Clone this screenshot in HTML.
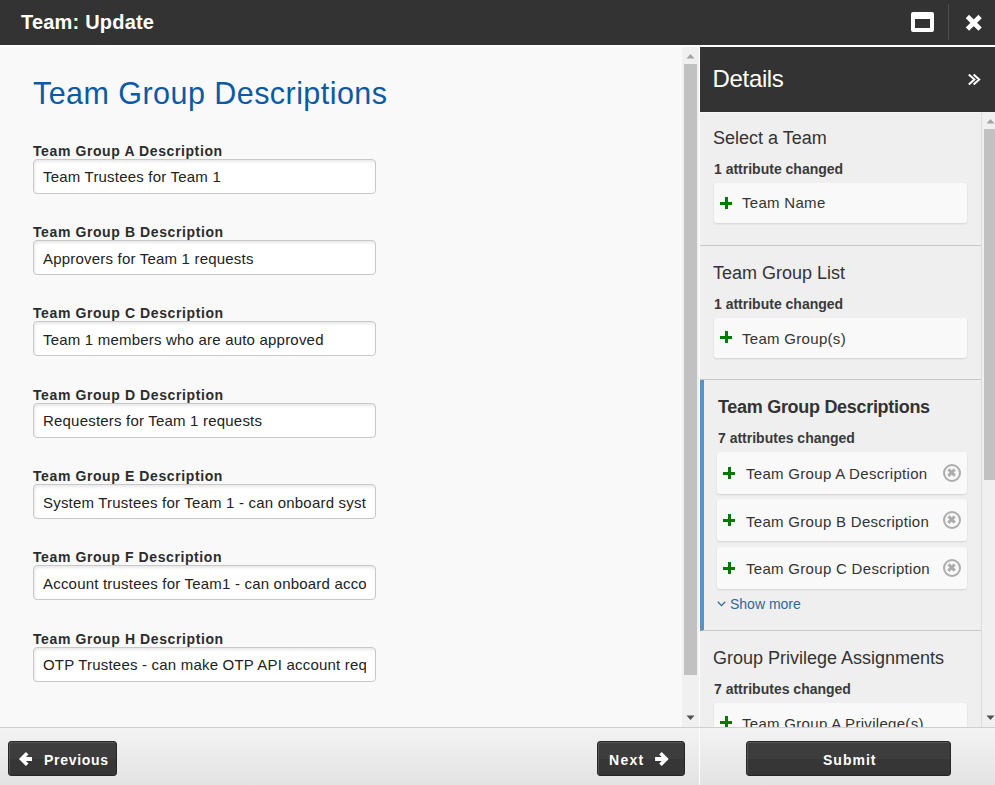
<!DOCTYPE html>
<html><head><meta charset="utf-8">
<style>
*{box-sizing:border-box;margin:0;padding:0}
html,body{width:995px;height:785px;overflow:hidden;background:#f9f9f9;font-family:"Liberation Sans",sans-serif;position:relative}
.a{position:absolute}
.t{position:absolute;white-space:nowrap;line-height:1}
#top{left:0;top:0;width:995px;height:45px;background:#333}
#title{left:21px;top:12px;font-size:20px;font-weight:bold;color:#fff;letter-spacing:0.2px}
#maxi{left:911px;top:12px;width:23px;height:20px;border:4px solid #fff;border-top-width:7px;border-radius:2px}
#vsep{left:948px;top:4px;width:1px;height:36px;background:#4d4d4d}
#strip{left:0;top:45px;width:995px;height:2px;background:#fff}
#left{left:0;top:47px;width:683px;height:680px;background:#f9f9f9}
h1{position:absolute;left:33px;top:78px;font-size:30.5px;font-weight:normal;color:#0a5aa5;letter-spacing:0.45px;line-height:1;white-space:nowrap}
.lbl{position:absolute;left:33px;font-size:14px;font-weight:bold;color:#2c2c2c;letter-spacing:0.6px;line-height:1;white-space:nowrap}
.inp{position:absolute;left:33px;width:343px;height:35px;background:#fff;border:1px solid #c8c8c8;border-radius:4px;box-shadow:inset 1px 2px 3px rgba(0,0,0,.09);overflow:hidden}
.inp span{position:absolute;left:9px;right:9px;overflow:hidden;height:20px;top:9px;font-size:15px;color:#222;letter-spacing:0.2px;line-height:1;white-space:nowrap}
.sb{background:#f0f0f0}
.thumb{background:#c1c1c1}
#footer{left:0;top:727px;width:995px;height:58px;border-top:1px solid #cfcfcf;background:linear-gradient(#f3f3f3,#e3e3e3)}
#fsep{left:699px;top:728px;width:1px;height:57px;background:#fff}
.btn{position:absolute;top:741px;height:35px;border:1px solid #262626;border-radius:3px;box-shadow:inset 1px 1px 0 rgba(255,255,255,.13);background:linear-gradient(#3d3d3d 0,#3d3d3d 50%,#363636 50%,#363636 100%);color:#fff;font-weight:bold;font-size:14px}
.btn .t{top:10px}
#details{left:700px;top:47px;width:295px;height:65px;background:#333}
#rbody{left:700px;top:112px;width:295px;height:615px;background:#efefef;overflow:hidden}
.sec{position:absolute;left:0;width:281px;border-bottom:1px solid #c8c8c8}
.sh{position:absolute;left:13px;font-size:18px;color:#333;line-height:1;white-space:nowrap}
.cnt{position:absolute;left:14px;font-size:14px;font-weight:bold;color:#3a3a3a;line-height:1;white-space:nowrap}
.card{position:absolute;left:14px;width:253px;height:41px;background:#f9f9f9;border-radius:3px;box-shadow:0 1px 2px rgba(0,0,0,.12)}
.card .ct{position:absolute;left:28px;top:13px;font-size:15px;color:#333;letter-spacing:0.3px;line-height:1;white-space:nowrap}
.plus{position:absolute;left:6px;top:14px;width:12px;height:12px}
.plus:before{content:"";position:absolute;left:4.5px;top:0;width:3px;height:12px;background:#007a00}
.plus:after{content:"";position:absolute;left:0;top:4.5px;width:12px;height:3px;background:#007a00}
.xc{position:absolute;left:226px;top:12px;width:18px;height:18px;border:2.3px solid #acacac;border-radius:50%}
.xc:before,.xc:after{content:"";position:absolute;left:2px;top:5.2px;width:9.4px;height:3.2px;background:#acacac;transform:rotate(45deg)}
.xc:after{transform:rotate(-45deg)}
</style></head><body>
<div id="top" class="a"></div>
<div id="title" class="t">Team: Update</div>
<div id="maxi" class="a"></div>
<div id="vsep" class="a"></div>
<svg class="a" style="left:965px;top:14px" width="18" height="18" viewBox="0 0 18 18"><path d="M2.4 2.5L15.1 15.2M15.1 2.5L2.4 15.2" stroke="#fff" stroke-width="4.7"/></svg>
<div id="strip" class="a"></div>
<div id="left" class="a"></div>
<h1>Team Group Descriptions</h1>

<div class="lbl" style="top:144px">Team Group A Description</div>
<div class="inp" style="top:159px"><span>Team Trustees for Team 1</span></div>
<div class="lbl" style="top:225px">Team Group B Description</div>
<div class="inp" style="top:240px"><span style="top:10px">Approvers for Team 1 requests</span></div>
<div class="lbl" style="top:306px">Team Group C Description</div>
<div class="inp" style="top:321px"><span style="top:10px">Team 1 members who are auto approved</span></div>
<div class="lbl" style="top:388px">Team Group D Description</div>
<div class="inp" style="top:403px"><span>Requesters for Team 1 requests</span></div>
<div class="lbl" style="top:469px">Team Group E Description</div>
<div class="inp" style="top:484px"><span style="top:10px">System Trustees for Team 1 - can onboard systems</span></div>
<div class="lbl" style="top:550px">Team Group F Description</div>
<div class="inp" style="top:565px"><span style="top:10px">Account trustees for Team1 - can onboard accounts</span></div>
<div class="lbl" style="top:632px">Team Group H Description</div>
<div class="inp" style="top:647px"><span>OTP Trustees - can make OTP API account requests</span></div>

<!-- left scrollbar -->
<div class="a sb" style="left:682px;top:47px;width:17px;height:680px"></div>
<div class="a thumb" style="left:684px;top:64px;width:13px;height:611px"></div>
<svg class="a" style="left:686px;top:53px" width="9" height="6"><path d="M0.5 5.5L4.5 1L8.5 5.5Z" fill="#a3a3a3"/></svg>
<svg class="a" style="left:686px;top:715px" width="9" height="6"><path d="M0.5 0.5L4.5 5L8.5 0.5Z" fill="#505050"/></svg>
<div class="a" style="left:699px;top:47px;width:1px;height:680px;background:#fff"></div>

<!-- right panel -->
<div id="details" class="a"></div>
<div class="t" style="left:712.6px;top:67px;font-size:24px;color:#fff;letter-spacing:-0.35px">Details</div>
<svg class="a" style="left:962px;top:66px" width="26" height="26" viewBox="0 0 26 26"><path d="M6.8 8.6L12.4 13.6L6.8 18.6M11.6 8.6L17.2 13.6L11.6 18.6" stroke="#fff" stroke-width="2" fill="none"/></svg>

<div id="rbody" class="a">
  <div class="a" style="left:0;top:0;width:295px;height:1px;background:#f6f6f6"></div>
  <div class="sec" style="top:0;height:134px">
    <div class="sh" style="top:17px">Select a Team</div>
    <div class="cnt" style="top:50px">1 attribute changed</div>
    <div class="card" style="top:71px;height:40px"><div class="plus" style="top:14px"></div><div class="ct" style="top:12px">Team Name</div></div>
  </div>
  <div class="sec" style="top:134px;height:134px">
    <div class="sh" style="top:18px">Team Group List</div>
    <div class="cnt" style="top:51px">1 attribute changed</div>
    <div class="card" style="top:72px;height:40px"><div class="plus" style="top:13px"></div><div class="ct" style="top:13px">Team Group(s)</div></div>
  </div>
  <div class="sec" style="top:268px;height:251px;border-left:4px solid #5a93c0">
    <div class="sh" style="top:18px;left:14px;font-weight:bold;letter-spacing:-0.3px">Team Group Descriptions</div>
    <div class="cnt" style="top:51px;left:14px">7 attributes changed</div>
    <div class="card" style="top:72px;left:13px;width:250px;height:42px"><div class="plus" style="top:15px"></div><div class="ct" style="left:29px;top:14px">Team Group A Description</div><div class="xc"></div></div>
    <div class="card" style="top:119px;left:13px;width:250px;height:42px"><div class="plus" style="top:15px"></div><div class="ct" style="left:29px;top:15px">Team Group B Description</div><div class="xc"></div></div>
    <div class="card" style="top:167px;left:13px;width:250px;height:42px"><div class="plus" style="top:15px"></div><div class="ct" style="left:29px;top:14px">Team Group C Description</div><div class="xc"></div></div>
    <svg class="a" style="left:13px;top:221px" width="9" height="6"><path d="M0.8 0.8L4.5 4.6L8.2 0.8" stroke="#2a6aa0" stroke-width="1.3" fill="none"/></svg>
    <div class="t" style="left:26px;top:217px;font-size:14px;color:#2a6aa0">Show more</div>
  </div>
  <div class="sec" style="top:519px;height:200px;border-bottom:none">
    <div class="sh" style="top:18px">Group Privilege Assignments</div>
    <div class="cnt" style="top:51px">7 attributes changed</div>
    <div class="card" style="top:72px;height:40px"><div class="plus" style="top:13px"></div><div class="ct" style="top:13px">Team Group A Privilege(s)</div></div>
  </div>
  <div class="a" style="left:281px;top:0;width:1px;height:615px;background:#dcdcdc"></div>
  <div class="a sb" style="left:282px;top:0;width:13px;height:615px"></div>
  <div class="a thumb" style="left:284px;top:17px;width:13px;height:351px"></div>
  <svg class="a" style="left:286px;top:6px" width="10" height="6"><path d="M0.5 5.5L4.5 1L8.5 5.5Z" fill="#a3a3a3"/></svg>
  <svg class="a" style="left:286px;top:603px" width="10" height="6"><path d="M0.5 0.5L4.5 5L8.5 0.5Z" fill="#505050"/></svg>
</div>

<div id="footer" class="a"></div>
<div id="fsep" class="a"></div>
<div class="btn" style="left:8px;width:109px"><svg class="a" style="left:-1px;top:-1px" width="40" height="35"><path d="M19.2 12.3L13.5 18L19.2 23.7" stroke="#fff" stroke-width="3.6" fill="none"/><path d="M14 18H24" stroke="#fff" stroke-width="4"/></svg><div class="t" style="left:35px;top:11px;letter-spacing:0.7px">Previous</div></div>
<div class="btn" style="left:597px;width:88px"><div class="t" style="left:11px;top:11px;letter-spacing:1.3px">Next</div><svg class="a" style="left:50px;top:-1px" width="30" height="35"><path d="M7.1 18H17" stroke="#fff" stroke-width="4"/><path d="M12.45 12.3L18.15 18L12.45 23.7" stroke="#fff" stroke-width="3.6" fill="none"/></svg></div>
<div class="btn" style="left:746px;width:205px"><div class="t" style="left:76px;top:11px;letter-spacing:1px">Submit</div></div>
</body></html>
